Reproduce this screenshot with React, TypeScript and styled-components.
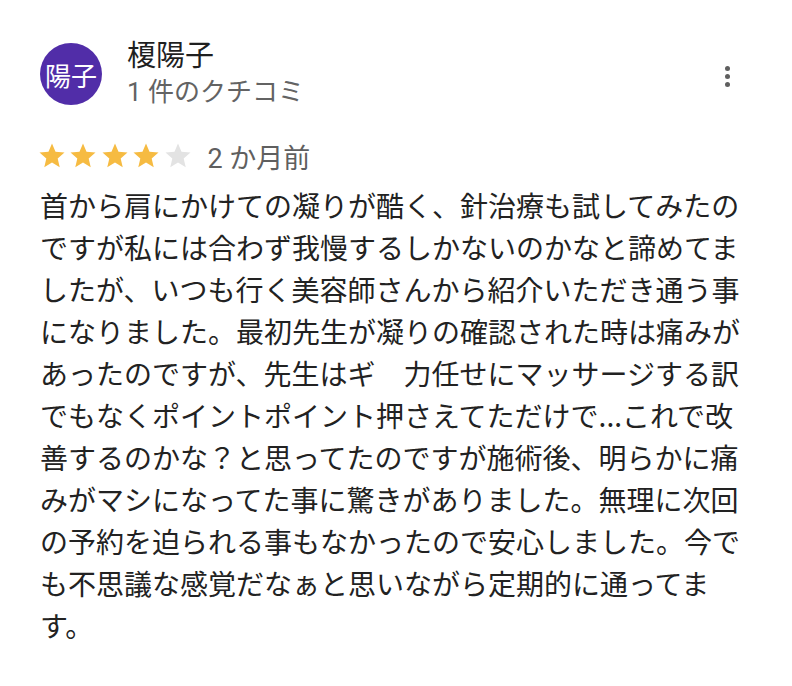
import React from "react";
import styled, { createGlobalStyle } from "styled-components";

const GlobalStyle = createGlobalStyle`
  html, body {
    margin: 0;
    padding: 0;
    background: #fff;
  }
  body {
    font-family: Roboto, "Noto Sans CJK JP", sans-serif;
  }
`;

const Card = styled.div`
  width: 792px;
  box-sizing: border-box;
  padding: 38px 40px 40px;
  background: #fff;
`;

const Header = styled.div`
  display: flex;
  align-items: center;
  gap: 25px;
`;

const Avatar = styled.div`
  width: 62px;
  height: 62px;
  border-radius: 50%;
  margin-left: 0;
  background: #512da8;
  color: #fff;
  display: flex;
  align-items: center;
  justify-content: center;
  font-size: 26px;
  flex-shrink: 0;
`;

const Author = styled.div`
  flex: 1;
  display: flex;
  flex-direction: column;
`;

const Name = styled.div`
  font-size: 29px;
  line-height: 36px;
  font-weight: 400;
  color: #1f1f1f;
`;

const Sub = styled.div`
  font-size: 26px;
  line-height: 36px;
  color: #636363;
`;

const MenuButton = styled.div`
  display: flex;
  flex-direction: column;
  gap: 3px;
  align-self: flex-start;
  margin-top: 28px;
  margin-right: 22px;
`;

const Dot = styled.span`
  width: 5px;
  height: 5px;
  border-radius: 50%;
  background: #5f5f5f;
`;

const RatingRow = styled.div`
  display: flex;
  align-items: center;
  margin-top: 28px;
  height: 36px;
`;

const Stars = styled.div`
  display: flex;
  gap: 1.5px;
  margin-left: -3.5px;
`;

const When = styled.span`
  margin-left: 15px;
  font-size: 27px;
  color: #5f5f5f;
`;

const Body = styled.p`
  margin: 10px 0 0;
  width: 712px;
  font-size: 28px;
  line-height: 42px;
  color: #222;
  font-family: "Noto Sans CJK JP", sans-serif;
`;

function Star({ filled }: { filled: boolean }) {
  return (
    <svg width="30" height="30" viewBox="0 0 24 24">
      <path
        d="M12 17.27L18.18 21l-1.64-7.03L22 9.24l-7.19-.61L12 2 9.19 8.63 2 9.24l5.46 4.73L5.82 21z"
        fill={filled ? "#f6bb42" : "#e3e3e3"}
      />
    </svg>
  );
}

const review =
  "首から肩にかけての凝りが酷く、針治療も試してみたのですが私には合わず我慢するしかないのかなと諦めてましたが、いつも行く美容師さんから紹介いただき通う事になりました。最初先生が凝りの確認された時は痛みがあったのですが、先生はギ　力任せにマッサージする訳でもなくポイントポイント押さえてただけで...これで改善するのかな？と思ってたのですが施術後、明らかに痛みがマシになってた事に驚きがありました。無理に次回の予約を迫られる事もなかったので安心しました。今でも不思議な感覚だなぁと思いながら定期的に通ってます。";

export default function App() {
  const rating = 4;
  return (
    <>
      <GlobalStyle />
      <Card>
        <Header>
          <Avatar>陽子</Avatar>
          <Author>
            <Name>榎陽子</Name>
            <Sub>1 件のクチコミ</Sub>
          </Author>
          <MenuButton>
            <Dot />
            <Dot />
            <Dot />
          </MenuButton>
        </Header>

        <RatingRow>
          <Stars>
            {[1, 2, 3, 4, 5].map((i) => (
              <Star key={i} filled={i <= rating} />
            ))}
          </Stars>
          <When>2 か月前</When>
        </RatingRow>

        <Body lang="ja">{review}</Body>
      </Card>
    </>
  );
}
